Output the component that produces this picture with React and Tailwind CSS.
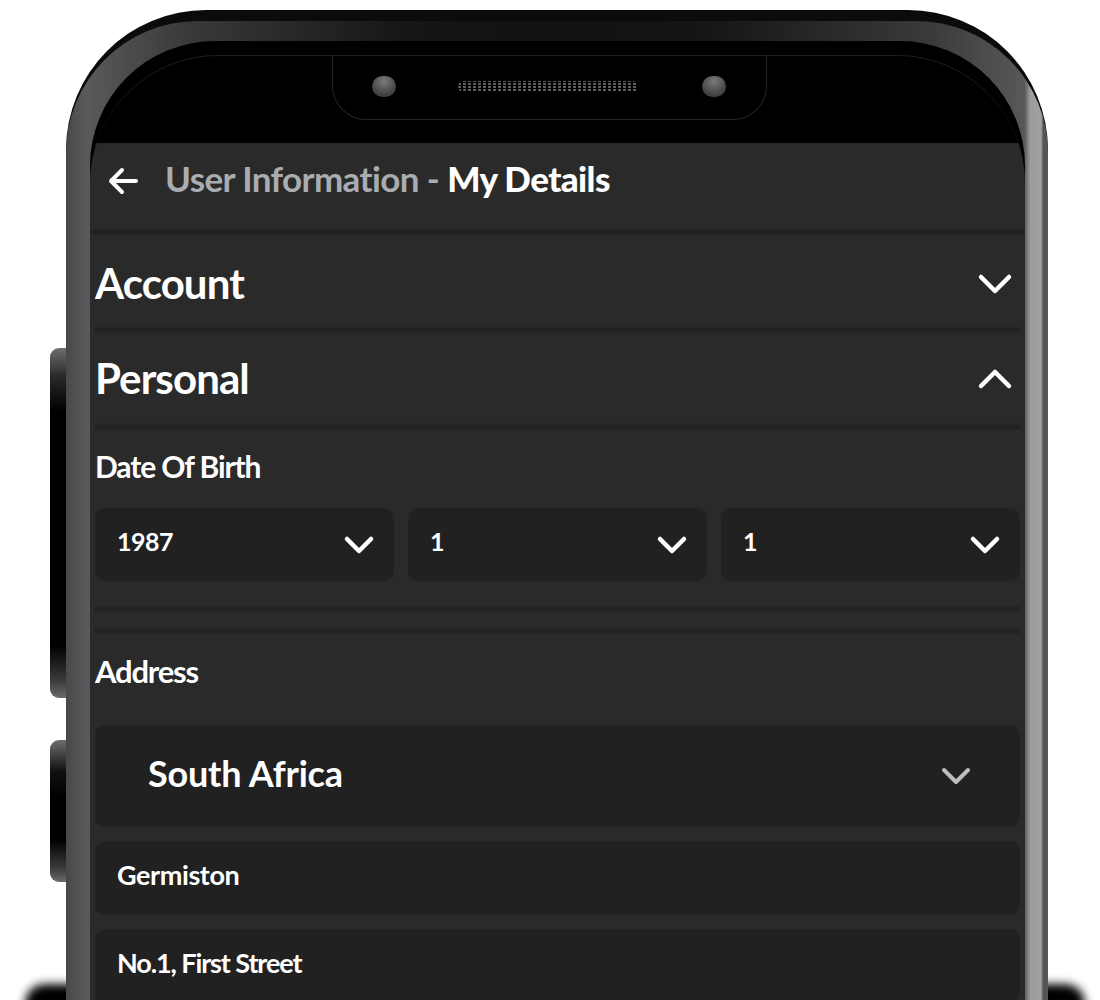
import React from 'react';

// 下拉箭头
const Chevron = ({ up = false, className = '', color = '#ffffff', w = 36, h = 24, sw = 4.5 }) => (
  <svg width={w} height={h} viewBox={`0 0 ${w} ${h}`} className={className} fill="none">
    <polyline
      points={up ? `4,${h - 5} ${w / 2},5 ${w - 4},${h - 5}` : `4,5 ${w / 2},${h - 5} ${w - 4},5`}
      stroke={color}
      strokeWidth={sw}
      strokeLinecap="round"
      strokeLinejoin="round"
    />
  </svg>
);

const Divider = () => <div className="h-[4px] bg-[#222222] shadow-[0_0_2px_#1c1c1c]"></div>;

const DateSelect = ({ value }) => (
  <div className="h-[73px] rounded-[10px] bg-[#212121] flex items-center justify-between pl-[22px] pr-[19px]">
    <span className="text-[25px] font-bold text-white tracking-[-0.5px] -mt-[6px]">{value}</span>
    <Chevron w={32} h={22} />
  </div>
);

const TextField = ({ value, tracking }) => (
  <div className="h-[74px] rounded-[10px] bg-[#212121] flex items-center pl-[22px]">
    <span className={`text-[27px] font-bold text-white -mt-[6px] ${tracking}`}>{value}</span>
  </div>
);

const App = () => {
  return (
    <div className="relative w-[1100px] h-[1000px] overflow-hidden bg-white font-['Lato','Noto_Sans',sans-serif]">
      {/* 底部阴影 */}
      <div className="absolute left-[25px] right-[15px] top-[984px] h-[40px] rounded-full bg-black blur-[5px]"></div>

      <div className="relative flex items-start pl-[50px] pt-[10px]">
        {/* 侧边按键 */}
        <div className="w-[16px] flex flex-col">
          <div className="mt-[338px] h-[350px] rounded-l-[9px] bg-[linear-gradient(180deg,#6e6e70_0%,#2a2a2a_8%,#000_18%,#000_85%,#3a3a3a_95%,#6a6a6a_100%)]"></div>
          <div className="mt-[42px] h-[142px] rounded-l-[9px] bg-[linear-gradient(180deg,#6e6e70_0%,#111_22%,#000_40%,#000_70%,#3a3a3a_90%,#6a6a6a_100%)]"></div>
        </div>

        {/* 手机外壳 */}
        <div className="w-[982px] h-[1100px] rounded-t-[140px] bg-[#0b0b0c] pt-[11px]">
          <div className="h-full rounded-t-[132px] bg-[linear-gradient(90deg,#48484a_0%,#5a5a5c_2%,#3a3a3c_12%,#151515_35%,#111_50%,#151515_65%,#3a3a3c_88%,#58585a_97.6%,#9c9c9e_98.2%,#a0a0a2_99.3%,#555557_99.5%)] pl-[24px] pr-[23px] pt-[20px]">
            <div className="h-full rounded-t-[125px] bg-black pt-[14px]">
              <div className="h-full rounded-t-[128px] border-t border-[#1d1d24] bg-black overflow-hidden">
                {/* 刘海 */}
                <div className="h-[88px] pl-[242px]">
                  <div className="w-[435px] h-[65px] -mt-px rounded-b-[34px] border border-t-0 border-[#24242c] bg-black flex items-center pl-[39px] pb-[2px]">
                    <div className="w-[24px] h-[21px] rounded-full bg-[radial-gradient(circle_at_50%_25%,#7a7a7c,#3a3a3a_80%)]"></div>
                    <div className="ml-[62px] w-[180px] h-[11px] rounded-full bg-[repeating-linear-gradient(0deg,#000_0_1px,transparent_1px_3px),repeating-linear-gradient(90deg,#5c5c5c_0_3px,#000_3px_5px)]"></div>
                    <div className="ml-[64px] w-[24px] h-[21px] rounded-full bg-[radial-gradient(circle_at_50%_25%,#7a7a7c,#3a3a3a_80%)]"></div>
                  </div>
                </div>

                {/* 应用内容 */}
                <div className="h-full bg-[#2a2a2a]">
                  <div className="h-[87px] flex items-center pl-[17px] pb-[16px]">
                    <svg width="32" height="30" viewBox="0 0 32 30" fill="none" className="mt-[4px]">
                      <path d="M29 15H5M15 4L4 15L15 26" stroke="#ffffff" strokeWidth="4" strokeLinecap="round" strokeLinejoin="round" />
                    </svg>
                    <span className="ml-[26px] text-[35px] font-bold tracking-[-0.6px] text-[#a9acb0]">
                      User Information - <span className="text-white font-black">My Details</span>
                    </span>
                  </div>
                  <Divider />

                  <div className="px-[5px]">
                    <div className="h-[94px] flex items-center justify-between pr-[7px] pt-[5px]">
                      <span className="text-[42px] font-bold text-white tracking-[-0.9px]">Account</span>
                      <Chevron />
                    </div>
                    <Divider />
                    <div className="h-[93px] flex items-center justify-between pr-[7px]">
                      <span className="text-[42px] font-bold text-white tracking-[-0.9px]">Personal</span>
                      <Chevron up />
                    </div>
                    <Divider />

                    <div className="mt-[22px] h-[30px] flex items-center">
                      <span className="text-[30px] font-bold text-white tracking-[-1.1px]">Date Of Birth</span>
                    </div>
                    <div className="mt-[27px] grid grid-cols-3 gap-[14px]">
                      <DateSelect value="1987" />
                      <DateSelect value="1" />
                      <DateSelect value="1" />
                    </div>

                    <div className="mt-[26px]"><Divider /></div>
                    <div className="mt-[18px]"><Divider /></div>

                    <div className="mt-[23px] h-[30px] flex items-center">
                      <span className="text-[31px] font-bold text-white tracking-[-1.2px]">Address</span>
                    </div>
                    <div className="mt-[39px] h-[102px] rounded-[10px] bg-[#212121] flex items-center justify-between pl-[53px] pr-[48px]">
                      <span className="text-[36px] font-bold text-white tracking-[-0.2px] -mt-[6px]">South Africa</span>
                      <Chevron w={32} h={22} sw={4} color="#bdbdbd" />
                    </div>
                    <div className="mt-[14px]"><TextField value="Germiston" tracking="tracking-[-0.4px]" /></div>
                    <div className="mt-[14px]"><TextField value="No.1, First Street" tracking="tracking-[-1.1px]" /></div>
                  </div>
                </div>
              </div>
            </div>
          </div>
        </div>
      </div>
    </div>
  );
};

export default App;
